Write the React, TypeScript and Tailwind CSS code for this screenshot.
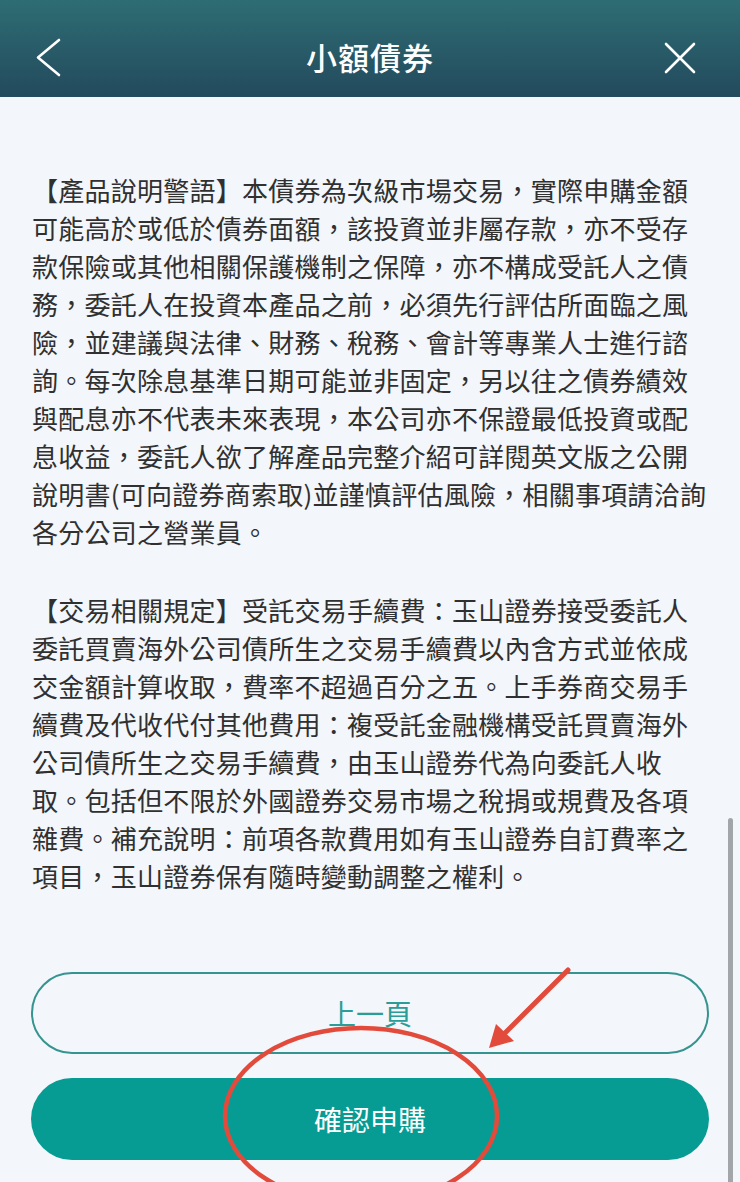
const para1 = [
  "【產品說明警語】本債券為次級市場交易，實際申購金額",
  "可能高於或低於債券面額，該投資並非屬存款，亦不受存",
  "款保險或其他相關保護機制之保障，亦不構成受託人之債",
  "務，委託人在投資本產品之前，必須先行評估所面臨之風",
  "險，並建議與法律、財務、稅務、會計等專業人士進行諮",
  "詢。每次除息基準日期可能並非固定，另以往之債券績效",
  "與配息亦不代表未來表現，本公司亦不保證最低投資或配",
  "息收益，委託人欲了解產品完整介紹可詳閱英文版之公開",
  "說明書(可向證券商索取)並謹慎評估風險，相關事項請洽詢",
  "各分公司之營業員。",
];

const para2 = [
  "【交易相關規定】受託交易手續費：玉山證券接受委託人",
  "委託買賣海外公司債所生之交易手續費以內含方式並依成",
  "交金額計算收取，費率不超過百分之五。上手券商交易手",
  "續費及代收代付其他費用：複受託金融機構受託買賣海外",
  "公司債所生之交易手續費，由玉山證券代為向委託人收",
  "取。包括但不限於外國證券交易市場之稅捐或規費及各項",
  "雜費。補充說明：前項各款費用如有玉山證券自訂費率之",
  "項目，玉山證券保有隨時變動調整之權利。",
];

function Paragraph({ lines }: { lines: string[] }) {
  return (
    <div className="text-[26px] leading-[38px] tracking-[0.25px] text-[#303030] whitespace-nowrap">
      {lines.map((l, i) => (
        <div key={i}>{l}</div>
      ))}
    </div>
  );
}

export default function App() {
  return (
    <div
      className="relative w-[740px] h-[1182px] overflow-hidden bg-[#f3f6fa]"
      style={{ fontFamily: '"Noto Sans CJK TC", "Noto Sans", sans-serif' }}
    >
      {/* header */}
      <div className="h-[97px] pt-[18px] flex items-center justify-between pl-[36px] pr-[44px] bg-gradient-to-b from-[#2e6d73] to-[#234a5d]">
        <svg width="26" height="39" viewBox="0 0 26 39" fill="none">
          <polyline points="23,2 2,19.5 23,37" stroke="white" strokeWidth="2.6" strokeLinecap="round" strokeLinejoin="round" />
        </svg>
        <h1 className="text-[31px] font-medium text-white tracking-[1px] ml-[14px]">小額債券</h1>
        <svg width="32" height="32" viewBox="0 0 32 32" fill="none">
          <path d="M2 2 L30 30 M30 2 L2 30" stroke="white" strokeWidth="2.6" strokeLinecap="round" />
        </svg>
      </div>

      {/* body */}
      <div className="pt-[74px] pl-[32px] pr-[28px] flex flex-col gap-[40px]">
        <Paragraph lines={para1} />
        <Paragraph lines={para2} />
      </div>

      <div className="mt-[77px] px-[31px] flex flex-col gap-[24px]">
        <button className="h-[82px] w-full rounded-full border-2 border-[#35948f] text-[#2a9d96] text-[28px]">
          上一頁
        </button>
        <button className="h-[82px] w-full rounded-full bg-[#069c93] text-white text-[28px]">
          確認申購
        </button>
      </div>

      {/* scrollbar */}
      <div className="absolute left-[728px] top-[818px] w-[5px] h-[380px] rounded-full bg-[#a2a6a9]" />

      {/* red annotation */}
      <svg className="absolute left-0 top-0 pointer-events-none" width="740" height="1182" viewBox="0 0 740 1182">
        <line x1="568" y1="970" x2="502" y2="1036" stroke="#e24b3b" strokeWidth="5" strokeLinecap="round" />
        <polygon points="489,1048 496,1024 514,1041" fill="#e24b3b" />
        <ellipse cx="361" cy="1116" rx="136" ry="88" fill="none" stroke="#e24b3b" strokeWidth="4.5" />
      </svg>
    </div>
  );
}
